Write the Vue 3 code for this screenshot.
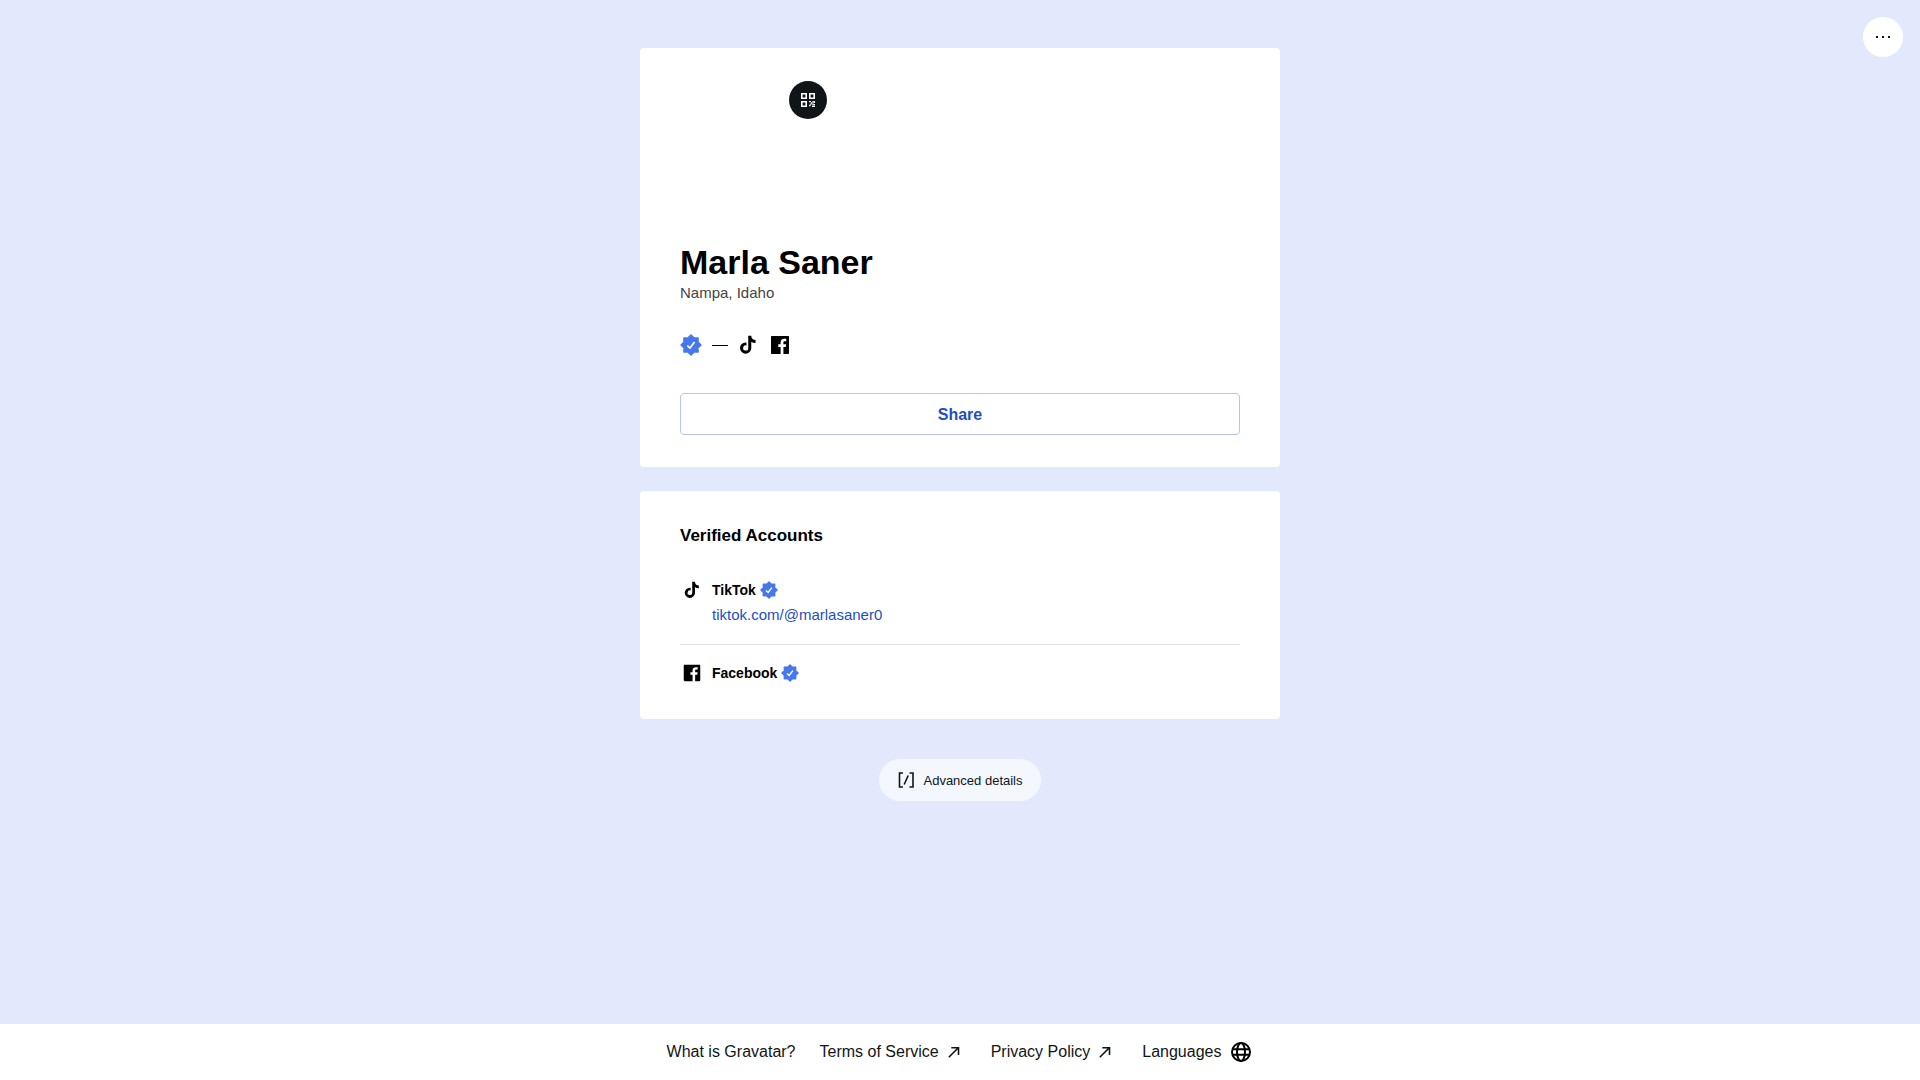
<template>
  <div class="page">
    <button class="more" type="button" aria-label="More options">
      <svg width="24" height="24" viewBox="0 0 24 24" shape-rendering="crispEdges">
        <path d="M5 11h2v2H5zM11 11h2v2h-2zM17 11h2v2h-2z" fill="currentColor" />
      </svg>
    </button>

    <main class="content">
      <section class="card profile">
        <div class="avatar">
          <button class="qr" type="button" aria-label="Show QR code">
            <svg width="14" height="14" viewBox="0 0 14 14" fill="#fff">
              <path
                fill-rule="evenodd"
                d="M0 0h6v6H0zM1.6 1.6v2.8h2.8V1.6zM8 0h6v6H8zM9.6 1.6v2.8h2.8V1.6zM0 8h6v6H0zM1.6 9.6v2.8h2.8V9.6z"
              />
              <path
                d="M8 8h2v1.2H8zM12.6 8H14v2h-1.4zM10 9.2h1.3v1.2H10zM11.3 8.2h1.3v1.2h-1.3zM9.2 10.4h1.4v1.3H9.2zM11.2 10.6h1.4v1.2h-1.4zM8 11.8h1.6v1.4H8zM11 12.6h3V14h-3zM12.6 11h1.4v1h-1.4z"
              />
            </svg>
          </button>
        </div>
        <h1>{{ profile.name }}</h1>
        <p class="location">{{ profile.location }}</p>

        <div class="socials">
          <span class="icon-box verified-icon">
            <svg width="22" height="22" viewBox="0 0 20 20">
              <path :d="badgePath" class="badge-shape" />
              <path d="M6.6 10.6l2.4 2.1 4.2-5.4" class="badge-check" />
            </svg>
          </span>
          <span class="dash"></span>
          <a
            v-for="account in accounts"
            :key="account.name"
            class="icon-box"
            href="#"
            :aria-label="account.name"
          >
            <svg :width="account.size" :height="account.size" viewBox="0 0 24 24">
              <path :d="account.icon" fill="currentColor" />
            </svg>
          </a>
        </div>

        <button class="share" type="button">Share</button>
      </section>

      <section class="card verified">
        <h2>Verified Accounts</h2>
        <ul class="accounts">
          <li v-for="account in accounts" :key="account.name" class="account">
            <span class="icon-box">
              <svg :width="account.size - 2" :height="account.size - 2" viewBox="0 0 24 24">
                <path :d="account.icon" fill="currentColor" />
              </svg>
            </span>
            <div class="account-info">
              <div class="account-name">
                {{ account.name }}
                <svg width="18" height="18" viewBox="0 0 20 20">
                  <path :d="badgePath" class="badge-shape" />
                  <path d="M6.6 10.6l2.4 2.1 4.2-5.4" class="badge-check" />
                </svg>
              </div>
              <a v-if="account.link" class="account-link" :href="'https://' + account.link">{{
                account.link
              }}</a>
            </div>
          </li>
        </ul>
      </section>

      <button class="advanced" type="button">
        <svg width="18" height="18" viewBox="0 0 18 18" fill="none" stroke="currentColor">
          <path d="M6 2H2.5v14H6M12.5 2H16v14h-3.5" stroke-width="1.6" />
          <path d="M11.2 4.5l-4 9" stroke-width="1.6" />
        </svg>
        Advanced details
      </button>
    </main>

    <footer class="footer">
      <a v-for="link in footerLinks" :key="link.label" href="#">
        {{ link.label }}
        <svg v-if="link.external" width="24" height="24" viewBox="0 0 24 24" fill="none">
          <path d="M5.8 17.2L15.3 7.7M8.3 7.7h7.2v7.2" stroke="currentColor" stroke-width="1.6" />
        </svg>
      </a>
      <button class="languages" type="button">
        Languages
        <svg width="24" height="24" viewBox="0 0 24 24" fill="none" stroke="#000" stroke-width="2">
          <circle cx="12" cy="12" r="9" />
          <ellipse cx="12" cy="12" rx="4" ry="9" />
          <path d="M3.5 9.3h17M3.5 14.7h17" />
        </svg>
      </button>
    </footer>
  </div>
</template>

<script setup>
const profile = {
  name: "Marla Saner",
  location: "Nampa, Idaho",
};

// Eight-pointed badge: a square with a rotated square on top
const badgePath = "M3.7 3.7h12.6v12.6H3.7zM10 1.1L18.9 10 10 18.9 1.1 10z";

const accounts = [
  {
    name: "TikTok",
    link: "tiktok.com/@marlasaner0",
    size: 22,
    icon: "M12.22 2h3.34s-.18 4.3 4.64 4.6v3.3s-2.57.16-4.64-1.42l.03 6.82a6.15 6.15 0 1 1-6.15-6.15h.9v3.4a2.82 2.82 0 1 0 1.98 2.7L12.22 2z",
  },
  {
    name: "Facebook",
    size: 24,
    icon: "M20 3H4c-.55 0-1 .45-1 1v16c0 .55.45 1 1 1h8.62v-6.97h-2.35v-2.72h2.35v-2c0-2.33 1.42-3.59 3.49-3.59 1 0 1.85.07 2.1.1v2.43h-1.44c-1.13 0-1.35.54-1.35 1.33v1.73h2.69l-.35 2.72h-2.34V21H20c.55 0 1-.45 1-1V4c0-.55-.45-1-1-1z",
  },
];

const footerLinks = [
  { label: "What is Gravatar?" },
  { label: "Terms of Service", external: true },
  { label: "Privacy Policy", external: true },
];
</script>

<style>
body {
  margin: 0;
}
</style>

<style scoped>
.page {
  position: relative;
  display: flex;
  flex-direction: column;
  min-height: 100vh;
  background: #e3e9fc;
  color: #000;
  font-family: "Liberation Sans", Arial, sans-serif;
  font-size: 16px;
}

button {
  font-family: inherit;
  cursor: pointer;
}

a {
  color: inherit;
  text-decoration: none;
}

svg {
  display: block;
  flex-shrink: 0;
}

.more {
  position: absolute;
  top: 17px;
  right: 17px;
  display: flex;
  align-items: center;
  justify-content: center;
  width: 40px;
  height: 40px;
  padding: 0;
  border: none;
  border-radius: 50%;
  background: #fff;
  color: #101517;
}

.content {
  display: flex;
  flex: 1;
  flex-direction: column;
  align-items: center;
  gap: 24px;
  padding: 48px 16px;
}

.card {
  box-sizing: border-box;
  width: 100%;
  max-width: 640px;
  padding: 32px 40px;
  border-radius: 4px;
  background: #fff;
}

.avatar {
  position: relative;
  width: 128px;
  height: 128px;
  margin-bottom: 34px;
}

.qr {
  position: absolute;
  top: 1px;
  right: -19px;
  display: flex;
  align-items: center;
  justify-content: center;
  width: 38px;
  height: 38px;
  padding: 0;
  border: none;
  border-radius: 50%;
  background: #101517;
}

h1 {
  margin: 0;
  font-size: 34px;
  line-height: 40px;
}

.location {
  margin: 0;
  color: #444;
  font-size: 15px;
  line-height: 21px;
}

.socials {
  display: flex;
  align-items: center;
  gap: 8px;
  margin: 30px 0 36px;
}

.icon-box {
  display: flex;
  flex-shrink: 0;
  align-items: center;
  justify-content: center;
  width: 24px;
  height: 24px;
}

.verified-icon {
  justify-content: flex-start;
}

.dash {
  width: 16px;
  margin-top: 1px;
  border-top: 1px solid #000;
}

.badge-shape {
  fill: #4678eb;
  stroke: #4678eb;
  stroke-width: 1.6;
  stroke-linejoin: round;
}

.badge-check {
  fill: none;
  stroke: #fff;
  stroke-width: 1.5;
}

.share {
  display: block;
  width: 100%;
  height: 42px;
  padding: 2px 0 0;
  border: 1px solid #b4c6ee;
  border-radius: 4px;
  background: #fff;
  color: #1d4fc4;
  font-size: 16px;
  font-weight: 700;
}

.verified {
  padding-bottom: 34px;
}

h2 {
  margin: 0 0 13px;
  font-size: 17px;
  line-height: 26px;
}

.accounts {
  margin: 0;
  padding: 0;
  list-style: none;
}

.account {
  display: flex;
  gap: 8px;
  padding: 16px 0;
}

.account + .account {
  border-top: 1px solid #e0e0e2;
}

.account:last-child {
  padding-bottom: 0;
}

.account-name {
  display: flex;
  align-items: center;
  gap: 4px;
  font-size: 14px;
  font-weight: 700;
  line-height: 24px;
}

.account-link {
  display: block;
  color: #1d4fc4;
  font-size: 15px;
  line-height: 26px;
}

.advanced {
  display: flex;
  align-items: center;
  gap: 8px;
  height: 42px;
  margin-top: 16px;
  padding: 0 18px;
  border: none;
  border-radius: 21px;
  background: #f4f7fe;
  color: #101517;
  font-size: 13px;
}

.footer {
  display: flex;
  flex-wrap: wrap;
  align-items: center;
  justify-content: center;
  gap: 0 24px;
  min-height: 56px;
  background: #fff;
  color: #101517;
}

.footer a {
  display: flex;
  align-items: center;
  gap: 4px;
}

.languages {
  display: flex;
  align-items: center;
  gap: 8px;
  padding: 0;
  border: none;
  background: none;
  color: inherit;
  font-size: 16px;
}
</style>
